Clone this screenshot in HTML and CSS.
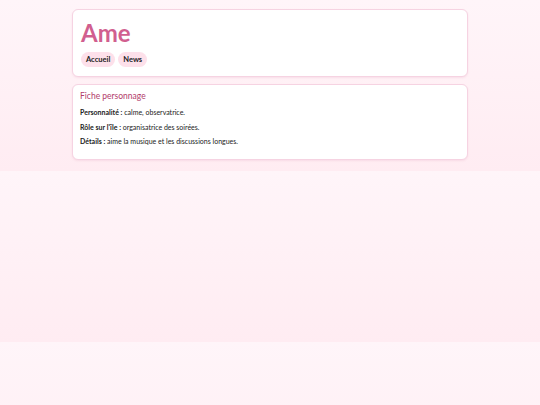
FILE: index.html
```html
<!DOCTYPE html>
<html lang="fr">
<head>
<meta charset="utf-8">
<title>Ame</title>
<link rel="stylesheet" href="styles.css">
</head>
<body>
<div class="wrap">
  <header class="card head">
    <h1 class="title">Ame</h1>
    <nav class="nav">
      <a class="pill" href="#">Accueil</a>
      <a class="pill" href="#">News</a>
    </nav>
  </header>
  <section class="card info">
    <h2 class="subtitle">Fiche personnage</h2>
    <p class="line"><b>Personnalité :</b> calme, observatrice.</p>
    <p class="line"><b>Rôle sur l'île :</b> organisatrice des soirées.</p>
    <p class="line"><b>Détails :</b> aime la musique et les discussions longues.</p>
  </section>
</div>
</body>
</html>
```
FILE: styles.css
```css
body {
  margin: 8px;
  font-family: Lato, sans-serif;
  background: linear-gradient(180deg, #fff5f9, #ffecf2);
  color: #222;
}
.wrap {
  max-width: 396px;
  margin: 0 auto;
  padding: 1px 0 3px;
  display: flex;
  flex-direction: column;
  gap: 7px;
}
.card {
  background: #fff;
  border: 1px solid #f6d3e2;
  border-radius: 6px;
  box-shadow: 0 1px 2px rgba(230, 170, 195, 0.25);
}
.head {
  padding: 6px 8px 9px;
}
.title {
  margin: 0;
  font-size: 24px;
  line-height: 34px;
  color: #d15f8f;
  font-weight: bold;
}
.nav {
  display: flex;
  gap: 3px;
  margin-top: 2px;
}
.pill {
  background: #fde0ea;
  color: #222;
  text-decoration: none;
  font-size: 7.5px;
  font-weight: bold;
  line-height: 15px;
  padding: 0 5px;
  border-radius: 8px;
}
.info {
  padding: 4px 7px 10px;
}
.subtitle {
  margin: 0 0 2px;
  font-size: 8.5px;
  line-height: 14px;
  color: #b23b6b;
  font-weight: normal;
}
.line {
  margin: 0;
  font-size: 7px;
  line-height: 14.5px;
}
```
